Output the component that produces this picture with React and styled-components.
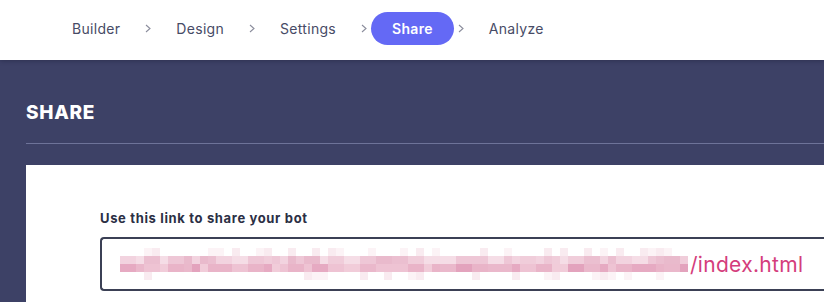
import React from "react";
import styled, { createGlobalStyle } from "styled-components";

const Global = createGlobalStyle`
  html, body { margin: 0; padding: 0; background: #3d4166; }
  body { width: 824px; height: 302px; overflow: hidden; font-family: Inter, "Open Sans", sans-serif; }
`;

const Page = styled.div`
  display: flex;
  flex-direction: column;
  width: 824px;
  height: 302px;
  overflow: hidden;
`;

const Nav = styled.nav`
  position: relative;
  z-index: 1;
  display: flex;
  align-items: center;
  height: 60px;
  box-sizing: border-box;
  padding: 0 0 3px 51px;
  background: #ffffff;
  box-shadow: 0 1px 4px rgba(20, 22, 45, 0.35);
`;

const Crumb = styled.span`
  display: flex;
  align-items: center;
  height: 33px;
  padding: 0 21px;
  border-radius: 17px;
  font-size: 14px;
  letter-spacing: 0.3px;
  font-weight: ${(p) => (p.$active ? 600 : 400)};
  color: ${(p) => (p.$active ? "#ffffff" : "#474b66")};
  background: ${(p) => (p.$active ? "#6469f5" : "transparent")};
`;

const ChevronIcon = styled.svg`
  display: block;
  width: 6px;
  height: 9px;
  margin: 0 4px;
  flex: none;
`;

const Chevron = () => (
  <ChevronIcon viewBox="0 0 6 9">
    <polyline points="1,1 5,4.5 1,8" fill="none" stroke="#8b8d9c" strokeWidth="1.1" />
  </ChevronIcon>
);

const Main = styled.main`
  flex: 1;
  display: flex;
  flex-direction: column;
  padding-left: 26px;
  background: #3d4166;
`;

const Title = styled.h1`
  margin: 41px 0 0;
  font-size: 19px;
  line-height: 24px;
  font-weight: 800;
  letter-spacing: 0.7px;
  color: #ffffff;
`;

const Divider = styled.hr`
  margin: 18px 0 0;
  border: 0;
  border-top: 1px solid #6e7399;
  height: 0;
`;

const Card = styled.section`
  flex: 1;
  margin-top: 21px;
  padding: 45px 0 0 74px;
  background: #ffffff;
`;

const Label = styled.div`
  font-size: 13px;
  line-height: 16px;
  font-weight: 700;
  letter-spacing: 0.65px;
  color: #2b2f45;
`;

const LinkBox = styled.div`
  display: flex;
  align-items: center;
  height: 50px;
  margin-top: 11px;
  padding-left: 18px;
  border: 2px solid #3b4055;
  border-right: 0;
  border-radius: 4px 0 0 4px;
`;

const MosaicSvg = styled.svg`
  display: block;
  flex: none;
`;

const LinkText = styled.span`
  font-size: 21px;
  letter-spacing: 0.3px;
  color: #d43d7c;
  white-space: nowrap;
  margin-left: 2px;
`;

function rng(seed) {
  let s = seed;
  return () => {
    s = (s * 1664525 + 1013904223) % 4294967296;
    return s / 4294967296;
  };
}

const COLS = 71;
const CELL = 8;
const mid = ["#eec7d6", "#f2d3df", "#ebbfd0", "#f0cdda", "#f5dde6", "#e9bacc"];
const dark = ["#eab8cb", "#e6aac2", "#eec3d3", "#e9b4c8", "#f1ccd9", "#e3a3bd"];
const faint = ["#ffffff", "#ffffff", "#ffffff", "#fcf3f6", "#f9ebf0", "#ffffff", "#ffffff"];

function buildCells() {
  const r = rng(11);
  const cells = [];
  let m = 0;
  let d = 0;
  for (let c = 0; c < COLS; c++) {
    if (c % 2 === 0 || r() < 0.4) {
      m = Math.floor(r() * mid.length);
      d = Math.floor(r() * dark.length);
    }
    cells.push({ x: c, y: 0, f: faint[Math.floor(r() * faint.length)] });
    cells.push({ x: c, y: 1, f: mid[m] });
    cells.push({ x: c, y: 2, f: dark[d] });
    cells.push({ x: c, y: 3, f: faint[Math.floor(r() * faint.length)] });
  }
  return cells;
}
const CELLS = buildCells();

const Mosaic = () => (
  <MosaicSvg width={COLS * CELL} height={4 * CELL} viewBox={`0 0 ${COLS * CELL} ${4 * CELL}`}>
    {CELLS.map((c, i) => (
      <rect key={i} x={c.x * CELL} y={c.y * CELL} width={CELL} height={CELL} fill={c.f} />
    ))}
  </MosaicSvg>
);

const steps = ["Builder", "Design", "Settings", "Share", "Analyze"];

export default function App() {
  return (
    <Page>
      <Global />
      <Nav>
        {steps.map((s, i) => (
          <React.Fragment key={s}>
            {i > 0 && <Chevron />}
            <Crumb $active={s === "Share"}>{s}</Crumb>
          </React.Fragment>
        ))}
      </Nav>
      <Main>
        <Title>SHARE</Title>
        <Divider />
        <Card>
          <Label>Use this link to share your bot</Label>
          <LinkBox>
            <Mosaic />
            <LinkText>/index.html</LinkText>
          </LinkBox>
        </Card>
      </Main>
    </Page>
  );
}
